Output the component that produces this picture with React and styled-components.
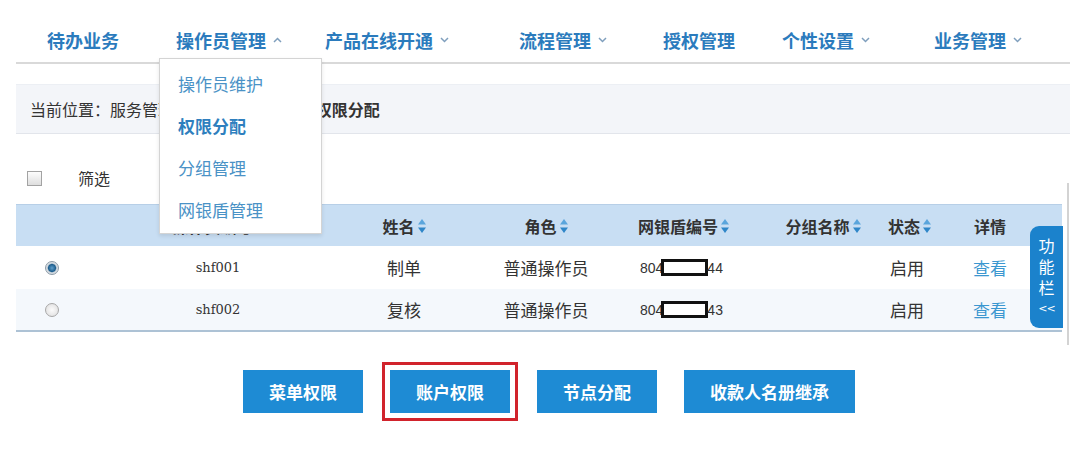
import React from 'react';
import styled, { createGlobalStyle, css } from 'styled-components';

const GlobalStyle = createGlobalStyle`
  html, body {
    margin: 0;
    padding: 0;
    background: #fff;
  }
  body {
    font-family: "Noto Sans CJK SC", "Liberation Sans", sans-serif;
    color: #333;
  }
`;

const COLS = '72px 260px 112px 172px 138px 106px 74px 80px 1fr';

const Page = styled.div`
  width: 1054px;
  margin-left: 16px;
  padding-bottom: 46px;
`;

const Nav = styled.nav`
  display: flex;
  height: 62px;
  padding-left: 31px;
  border-bottom: 2px solid #d9d9d9;
`;

const NavItem = styled.div`
  position: relative;
  flex-shrink: 0;
  width: ${p => p.$w}px;
  height: 62px;
  box-sizing: border-box;
  padding-top: 18px;
`;

const NavLabel = styled.span`
  display: inline-flex;
  align-items: center;
  gap: 7px;
  height: 44px;
  line-height: 44px;
  font-size: 18px;
  font-weight: 700;
  color: #2b7bbd;
  white-space: nowrap;
`;

const Dropdown = styled.ul`
  position: absolute;
  top: 58px;
  left: -17px;
  z-index: 10;
  width: 163px;
  box-sizing: border-box;
  margin: 0;
  padding: 4px 0 2px;
  list-style: none;
  background: #fff;
  border: 1px solid #d4d4d4;
  box-shadow: 0 2px 4px rgba(0, 0, 0, 0.1);
`;

const DropItem = styled.li`
  height: 42px;
  line-height: 42px;
  padding-left: 18px;
  font-size: 17px;
  color: #4a92c6;
  white-space: nowrap;
  ${p => p.$active && css`
    font-weight: 700;
    color: #2e7fbe;
  `}
`;

const Breadcrumb = styled.div`
  margin-top: 20px;
  height: 50px;
  box-sizing: border-box;
  padding-left: 14px;
  line-height: 48px;
  font-size: 16px;
  color: #333;
  background: #f3f5f9;
  border-top: 1px solid #eceff4;
  border-bottom: 1px solid #e2e5eb;
  white-space: nowrap;
`;

const Sep = styled.span`
  padding: 0 11px;
`;

const Current = styled.b`
  font-weight: 700;
`;

const FilterBar = styled.div`
  display: flex;
  align-items: center;
  height: 70px;
  box-sizing: border-box;
  padding: 30px 0 12px 11px;
  font-size: 16px;
`;

const CheckBox = styled.span`
  width: 13px;
  height: 13px;
  margin-right: 36px;
  border: 1px solid #a3a3a3;
  background: linear-gradient(#fdfdfd, #dedede);
`;

const TableArea = styled.div`
  position: relative;
  margin-right: 8px;

  &::after {
    content: '';
    position: absolute;
    top: -21px;
    bottom: -13px;
    right: -7px;
    width: 2px;
    background: #d3d3d3;
  }
`;

const HeadRow = styled.div`
  display: grid;
  grid-template-columns: ${COLS};
  height: 42px;
  box-sizing: border-box;
  background: #c8def3;
  border-top: 1px solid #b7cfe7;
`;

const Row = styled.div`
  display: grid;
  grid-template-columns: ${COLS};
  height: 43px;
  box-sizing: border-box;
  background: ${p => (p.$alt ? '#f4f8fc' : '#fff')};
  ${p => p.$last && css`
    border-bottom: 2px solid #adc2d5;
  `}
`;

const Cell = styled.div`
  display: flex;
  align-items: center;
  justify-content: ${p => (p.$left ? 'flex-start' : 'center')};
  padding-left: ${p => p.$pl || 0}px;
  font-size: 17px;
  color: #333;
  white-space: nowrap;
`;

const HeadCell = styled(Cell)`
  font-size: 16px;
  font-weight: 700;
  gap: 3px;
`;

const Code = styled.span`
  font-family: "DejaVu Serif", "Liberation Serif", serif;
  font-size: 13px;
  color: #333;
`;

const Num = styled.span`
  font-family: "Liberation Sans", sans-serif;
  font-size: 14px;
  color: #333;
  display: inline-flex;
  align-items: center;
`;

const Redact = styled.span`
  display: inline-block;
  width: 41px;
  height: 11px;
  margin: 0 -1px 0 -2px;
  border: 3px solid #111;
  background: #fff;
`;

const Link = styled.span`
  color: #3b97d0;
`;

const Radio = styled.span`
  width: 12px;
  height: 12px;
  border-radius: 50%;
  border: 1px solid #a7a7a7;
  background: radial-gradient(circle, #fbfbfb 0%, #dcdcdc 100%);
  ${p => p.$checked && css`
    border-color: #8c9aa6;
    background: radial-gradient(circle, #5f9fcc 0%, #1f5f8e 42%, #cfd7de 56%, #eef0f2 100%);
  `}
`;

const SideTab = styled.div`
  position: absolute;
  top: 22px;
  right: -1px;
  z-index: 5;
  width: 33px;
  height: 102px;
  box-sizing: border-box;
  padding-top: 9px;
  display: flex;
  flex-direction: column;
  align-items: center;
  border-radius: 9px 0 0 9px;
  background: #1b82cc;
  color: #fff;
  font-size: 16px;
  line-height: 21px;
`;

const TabArrows = styled.span`
  font-family: "DejaVu Sans", sans-serif;
  font-size: 11px;
  letter-spacing: -1px;
`;

const Actions = styled.div`
  display: flex;
  gap: 27px;
  margin-top: 38px;
  padding-left: 227px;
`;

const Button = styled.button`
  height: 43px;
  padding: 0 26px;
  border: none;
  background: #1e8bd4;
  color: #fff;
  font-family: "Noto Sans CJK SC", sans-serif;
  font-size: 17px;
  font-weight: 700;
  ${p => p.$marked && css`
    box-shadow: 0 0 0 5px #fff, 0 0 0 8px #d1232c;
  `}
`;

const Chevron = ({ up }) => (
  <svg width="9" height="6" viewBox="0 0 9 6">
    <path
      d={up ? 'M1 5 L4.5 1.5 L8 5' : 'M1 1 L4.5 4.5 L8 1'}
      fill="none"
      stroke="#7f9fbd"
      strokeWidth="1.5"
    />
  </svg>
);

const SortIcon = () => (
  <svg width="8" height="14" viewBox="0 0 8 14">
    <path d="M4 0 L8 5.5 L0 5.5 Z" fill="#5aa5dc" />
    <path d="M0 8.5 L8 8.5 L4 14 Z" fill="#2f86c8" />
  </svg>
);

const navItems = [
  { label: '待办业务', w: 129 },
  { label: '操作员管理', w: 149, arrow: 'up', open: true },
  { label: '产品在线开通', w: 194, arrow: 'down' },
  { label: '流程管理', w: 144, arrow: 'down' },
  { label: '授权管理', w: 119 },
  { label: '个性设置', w: 152, arrow: 'down' },
  { label: '业务管理', w: 120, arrow: 'down' },
];

const menu = ['操作员维护', '权限分配', '分组管理', '网银盾管理'];

const columns = [
  { title: '' },
  { title: '操作员编号', sort: true },
  { title: '姓名', sort: true },
  { title: '角色', sort: true },
  { title: '网银盾编号', sort: true, left: true, pl: 6 },
  { title: '分组名称', sort: true },
  { title: '状态', sort: true, left: true, pl: 12 },
  { title: '详情' },
  { title: '' },
];

const rows = [
  { id: 'shf001', name: '制单', role: '普通操作员', pre: '804', post: '44', status: '启用', checked: true },
  { id: 'shf002', name: '复核', role: '普通操作员', pre: '804', post: '43', status: '启用' },
];

const buttons = ['菜单权限', '账户权限', '节点分配', '收款人名册继承'];

export default function App() {
  return (
    <>
      <GlobalStyle />
      <Page>
        <Nav>
          {navItems.map(item => (
            <NavItem key={item.label} $w={item.w}>
              <NavLabel>
                {item.label}
                {item.arrow && <Chevron up={item.arrow === 'up'} />}
              </NavLabel>
              {item.open && (
                <Dropdown>
                  {menu.map(m => (
                    <DropItem key={m} $active={m === '权限分配'}>{m}</DropItem>
                  ))}
                </Dropdown>
              )}
            </NavItem>
          ))}
        </Nav>

        <Breadcrumb>
          当前位置：服务管理<Sep>&gt;</Sep>操作员管理<Sep>&gt;</Sep>
          <Current>权限分配</Current>
        </Breadcrumb>

        <FilterBar>
          <CheckBox />
          筛选
        </FilterBar>

        <TableArea>
          <HeadRow>
            {columns.map((c, i) => (
              <HeadCell key={i} $left={c.left} $pl={c.pl}>
                {c.title}
                {c.sort && <SortIcon />}
              </HeadCell>
            ))}
          </HeadRow>
          {rows.map((r, i) => (
            <Row key={r.id} $alt={i % 2 === 1} $last={i === rows.length - 1}>
              <Cell><Radio $checked={r.checked} /></Cell>
              <Cell><Code>{r.id}</Code></Cell>
              <Cell>{r.name}</Cell>
              <Cell>{r.role}</Cell>
              <Cell $left $pl={8}>
                <Num>{r.pre}<Redact />{r.post}</Num>
              </Cell>
              <Cell />
              <Cell $left $pl={14}>{r.status}</Cell>
              <Cell><Link>查看</Link></Cell>
              <Cell />
            </Row>
          ))}
          <SideTab>
            <span>功</span>
            <span>能</span>
            <span>栏</span>
            <TabArrows>&lt;&lt;</TabArrows>
          </SideTab>
        </TableArea>

        <Actions>
          {buttons.map(b => (
            <Button key={b} $marked={b === '账户权限'}>{b}</Button>
          ))}
        </Actions>
      </Page>
    </>
  );
}
